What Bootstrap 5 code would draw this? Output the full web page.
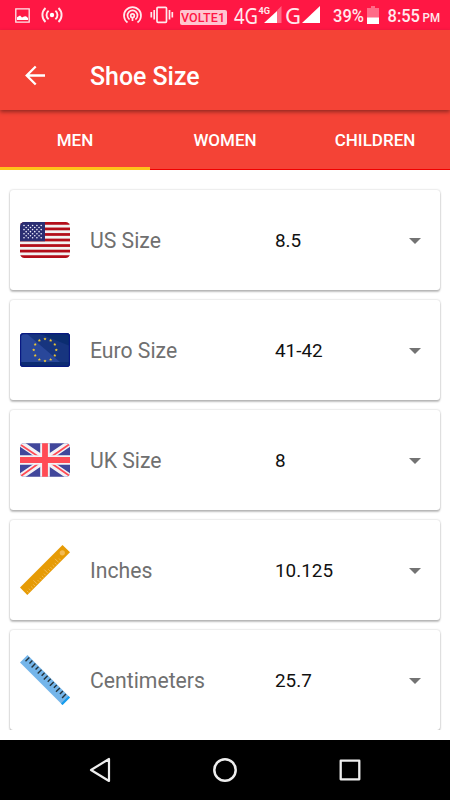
<!DOCTYPE html>
<html lang="en">
<head>
<meta charset="utf-8">
<meta name="viewport" content="width=device-width, initial-scale=1">
<title>Shoe Size</title>
<link href="https://cdn.jsdelivr.net/npm/bootstrap@5.3.0/dist/css/bootstrap.min.css" rel="stylesheet">
<style>
body{font-family:Roboto,"Liberation Sans",sans-serif;height:800px;overflow:hidden;background:#fff}
svg{display:block;flex:none;overflow:visible}
.status{height:30px;background:#ff1744;color:#ffe9ed;line-height:1}
.status .inner{height:30px;padding:0 10px 0 15px}
.volte{width:47px;height:15px;margin-left:6px;margin-top:4px;border-radius:2px;background:#ffc5d0;color:#ff1744;font-size:12.5px;font-weight:500;line-height:15px;text-align:center;letter-spacing:.1px}
.toolbar{height:80px;background:#f44336;box-shadow:0 2px 4px rgba(0,0,0,.4);z-index:2;padding:13px 25px 0;color:#fff}
.toolbar h1{font-size:24.9px;font-weight:500;margin-left:45px;padding-top:1px;line-height:1}
.tabs{height:60px;background:#f44336;border-bottom:1px solid #f00000}
.tabs .nav-link{height:60px;padding:2px 0 0;color:#fff;font-size:17px;font-weight:500;border-radius:0}
.tabs .nav-link.active{box-shadow:inset 0 -3px #ffc11a}
.sizes{height:570px}
.sizes .viewport{height:560px;padding:20px 10px 0;gap:10px}
.size-card{height:100px;flex:none;border:0;border-radius:3px;padding:0 19px 0 10px;box-shadow:0 0 2px rgba(0,0,0,.25),0 2px 2px rgba(0,0,0,.24)}
.pic{width:50px;flex:none}
.lbl{width:205px;flex:none;padding:2px 0 0 20px;font-size:21.2px;color:#707070;line-height:1}
.val{font-size:18.9px;color:#111;line-height:1;padding-top:2px}
.navbtns{height:60px;background:#000;padding:0 88px}
</style>
<script src="https://cdn.jsdelivr.net/npm/bootstrap@5.3.0/dist/js/bootstrap.bundle.min.js"></script>
</head>
<body class="d-flex flex-column">
<header class="status">
 <div class="inner d-flex align-items-center">
  <svg width="15" height="15" viewBox="0 0 15 15"><path d="M.8.8h13.4v13.4H.8z" fill="none" stroke="#ffe9ed" stroke-width="1.3"/><path d="M2 12V9.2l3-1.8 2 2.2 2-1.2 2-.2 2 1.8v2z" fill="#fff"/></svg>
  <svg width="22" height="16" viewBox="0 0 22 16" style="margin-left:11px" fill="none" stroke="#ffe9ed" stroke-width="1.9"><circle cx="11" cy="8" r="2.2" fill="#fff" stroke="none"/><path d="M7.600 3.700a5.500 5.500 0 0 0 0 8.600M14.400 3.700a5.500 5.500 0 0 1 0 8.600M4.500 1a9.500 9.500 0 0 0 0 14M17.500 1a9.500 9.500 0 0 1 0 14"/></svg>
  <svg class="ms-auto" width="19" height="17" viewBox="0 0 19 17" fill="none" stroke="#ffe9ed" stroke-width="1.7"><path d="M4.500 15.500a8.500 8.500 0 1 1 10 0M6.600 12.500a5 5 0 1 1 5.800 0"/><circle cx="9.500" cy="8.700" r="1.8"/><path d="M9.500 10v4"/></svg>
  <svg width="24" height="18" viewBox="0 0 24 18" style="margin-left:7.500px" fill="none" stroke="#ffe9ed" stroke-width="1.700"><rect x="7" y="1.300" width="9.500" height="15" rx="1"/><path d="M4.200 4v9.500M1.300 6v5.500M19.500 4v9.500M22.300 6v5.500"/></svg>
  <span class="volte">VOLTE1</span>
  <svg width="49" height="22" viewBox="0 0 49 22" style="margin-left:7.500px" fill="#ffe9ed"><text x="0" y="19.500" font-family="Noto Sans,sans-serif" font-size="22.500" textLength="24" lengthAdjust="spacingAndGlyphs">4G</text><path d="M47.500 2v17H43V6.500z" opacity=".38"/><path d="M43 7v12H30z" fill="#fff"/><text x="24.500" y="9.500" font-family="Roboto,sans-serif" font-size="9.500" font-weight="700" textLength="11.500" lengthAdjust="spacingAndGlyphs">4G</text></svg>
  <svg width="36" height="22" viewBox="0 0 36 22" style="margin-left:3px" fill="#ffe9ed"><text x="-1" y="19.500" font-family="Noto Sans,sans-serif" font-size="22.500" textLength="16" lengthAdjust="spacingAndGlyphs">G</text><path d="M34 2v17H16z" fill="#fff"/></svg>
  <svg width="33" height="20" viewBox="0 0 33 20" style="margin-left:10px" fill="#ffe9ed"><text x="1" y="16.500" font-family="Roboto,sans-serif" font-size="17.500" font-weight="500" textLength="31" lengthAdjust="spacingAndGlyphs">39%</text></svg>
  <svg width="12" height="18" viewBox="0 0 12 18" style="margin-left:2px"><path d="M0 2h4V0h4v2h4v10H0z" fill="#ff6b88"/><path d="M0 11.500h12V18H0z" fill="#fff"/></svg>
  <svg width="54" height="20" viewBox="0 0 54 20" style="margin-left:7px" fill="#ffe9ed" font-family="Roboto,sans-serif" font-weight="500"><text x="1.500" y="16.500" font-size="18" textLength="32.500" lengthAdjust="spacingAndGlyphs">8:55</text><text x="36.500" y="16.500" font-size="12.500" textLength="17.500" lengthAdjust="spacingAndGlyphs">PM</text></svg>
 </div>
</header>
<div class="toolbar d-flex align-items-center position-relative">
 <svg class="mb-1" width="20" height="20" viewBox="0 0 20 20" fill="none" stroke="#fff" stroke-width="2.300"><path d="M20 10.500H1.800M10.700 1.500l-9 9 9 9"/></svg>
 <h1 class="mb-0">Shoe Size</h1>
</div>
<nav class="tabs nav nav-fill flex-nowrap row g-0">
 <a class="nav-link active col-4 d-flex align-items-center justify-content-center" href="#">MEN</a>
 <a class="nav-link col-4 d-flex align-items-center justify-content-center" href="#">WOMEN</a>
 <a class="nav-link col-4 d-flex align-items-center justify-content-center" href="#">CHILDREN</a>
</nav>
<main class="sizes"><div class="viewport d-flex flex-column overflow-hidden" id="list"></div></main>
<footer class="navbtns d-flex align-items-center justify-content-between">
 <svg width="24" height="26" viewBox="0 0 24 26" fill="none" stroke="#eee" stroke-width="2.200" stroke-linejoin="round"><path d="M21 2v22L3 13z"/></svg>
 <svg width="26" height="26" viewBox="0 0 26 26" fill="none" stroke="#eee" stroke-width="2.500"><circle cx="13" cy="13" r="10.700"/></svg>
 <svg width="24" height="26" viewBox="0 0 24 26" fill="none" stroke="#eee" stroke-width="2.300" stroke-linejoin="round"><path d="M2.700 3.700h18.600v18.600H2.700z"/></svg>
</footer>
<script>
const range = n => [...Array(n).keys()];
// US: thirteen stripes and a canton of staggered stars
const us = `<svg width="50" height="36" viewBox="0 0 50 36"><clipPath id="u"><rect width="50" height="36" rx="4.500"/></clipPath><g clip-path="url(#u)"><path fill="#f2f2f2" d="M0 0h50v36H0z"/>${range(7).map(i=>`<rect y="${i*5.54}" width="50" height="2.77" fill="#b30d19"/>`).join('')}<path fill="#2b2e72" d="M0 0h25v19.300H0z"/>${range(7).map(r=>range(r%2?4:5).map(c=>`<circle cx="${4+c*4.3+(r%2?2.15:0)}" cy="${3.5+r*2.05}" r=".8" fill="#f4f4ff"/>`).join('')).join('')}</g></svg>`;
// EU: twelve five-pointed stars in a ring
const star = (x,y) => `<polygon fill="#edc635" points="${range(10).map(i=>{const a=i*Math.PI/5-Math.PI/2,r=i%2?.8:1.6;return (x+r*Math.cos(a)).toFixed(2)+','+(y+r*Math.sin(a)).toFixed(2)}).join(' ')}"/>`;
const eu = `<svg width="50" height="34" viewBox="0 0 50 34"><clipPath id="e"><rect width="50" height="34" rx="3.500"/></clipPath><g clip-path="url(#e)"><path fill="#17357f" d="M0 0h50v34H0z"/><path fill="#29479a" d="M0 0h6l34 29H0z"/><path fill="#0b2d70" d="M18 0h32v13z"/><path fill="#0d2c72" d="M0 29h50v5H0z"/></g><rect x=".6" y=".6" width="48.800" height="32.800" rx="3.200" fill="none" stroke="#091981" stroke-width="1.200"/>${range(12).map(i=>star(25+11.3*Math.sin(i*Math.PI/6),17-11*Math.cos(i*Math.PI/6))).join('')}</svg>`;
const uk = `<svg width="50" height="34" viewBox="0 0 50 34"><clipPath id="k"><rect y=".3" width="50" height="33.400" rx="4"/></clipPath><g clip-path="url(#k)"><path fill="#41479b" d="M0 0h50v34H0z"/><path d="M0 0 50 34M50 0 0 34" stroke="#f2f2f5" stroke-width="6.200"/><path d="M1 2 22 16M49 1.500 28 16M1 33 22 18M49 32.500 28 18" stroke="#ff4b55" stroke-width="1.700"/><path d="M25 0v34M0 17h50" stroke="#f2f2f5" stroke-width="9.600"/><path d="M25 0v34M0 17h50" stroke="#ff4b55" stroke-width="5.800"/></g></svg>`;
const inch = `<svg width="50" height="50" viewBox="0 0 50 50"><path fill="#e69b05" d="M42.500 0 50 7.300 7.300 50 0 42.500z"/><circle cx="42.300" cy="7.800" r="2.600" fill="#f3bb55"/><g stroke="#f3bb55" stroke-width="1">${range(16).map(i=>{const x=8.5+i*2.15,y=47.5-i*2.15,l=i%5==4?3.6:1.7;return `<path d="M${x} ${y}l${-l} ${-l}"/>`}).join('')}</g></svg>`;
const cm = `<svg width="50" height="50" viewBox="0 0 50 50"><path fill="#74b5ea" d="M7.500 0 50 42.500 42.500 50 0 7.500z"/><path fill="#159ded" d="m48.500 41 1.500 1.500-7.500 7.500-1.500-1.500z"/><g stroke="#263238" stroke-width="1.400">${range(13).map(i=>{const x=9.3+i*3.05,y=2.5+i*3.05,l=i%2?2.9:3.8;return `<path d="M${x} ${y}l${-l} ${l}"/>`}).join('')}</g></svg>`;
document.getElementById('list').innerHTML = [[us,'US Size','8.5'],[eu,'Euro Size','41-42'],[uk,'UK Size','8'],[inch,'Inches','10.125'],[cm,'Centimeters','25.7']].map(([p,l,v])=>`<section class="size-card card flex-row align-items-center"><div class="pic">${p}</div><div class="lbl">${l}</div><div class="val">${v}</div><svg class="ms-auto" width="12" height="7" viewBox="0 0 12 7"><path d="M0 1h12L6 7z" fill="#737373"/></svg></section>`).join('');
</script>
</body>
</html>
